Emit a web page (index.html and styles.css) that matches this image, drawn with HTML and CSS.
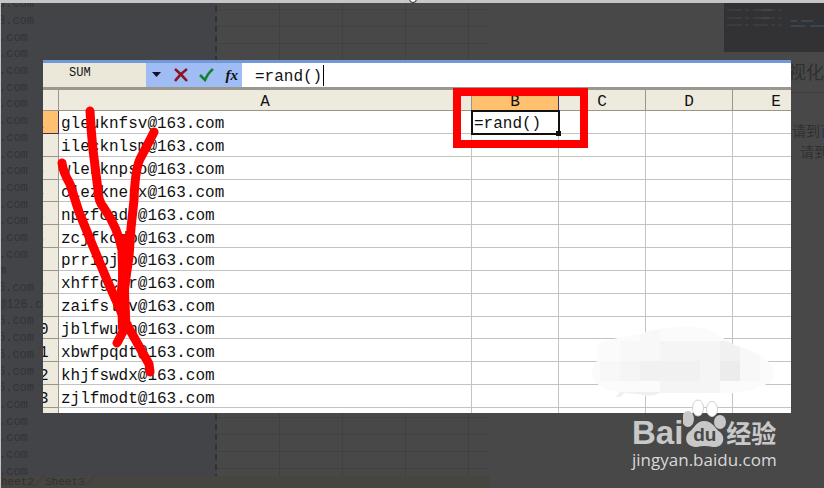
FILE: index.html
```
<!DOCTYPE html>
<html lang="zh-CN">

<head>
  <meta charset="UTF-8" />
  <meta name="viewport" content="width=device-width, initial-scale=1" />
  <title>rand()</title>
  <link rel="stylesheet" href="styles.css">
</head>

<body>
  <!-- dimmed page behind the picture -->
  <div class="page">
    <div class="top-strip"><span class="handle"></span></div>
    <div class="backdrop">
      <div class="old-sheet">
        <div class="old-body">
          <ul class="old-mails">
            <li class="w5">3.com</li>
            <li class="w5">3.com</li>
            <li>.com</li>
            <li>.com</li>
            <li>.com</li>
            <li>.com</li>
            <li>.com</li>
            <li>.com</li>
            <li>.com</li>
            <li>.com</li>
            <li>.com</li>
            <li>.com</li>
            <li>.com</li>
            <li>.com</li>
            <li>.com</li>
            <li>.com</li>
            <li>m</li>
            <li class="w5">6.com</li>
            <li>@126.c</li>
            <li class="w5">6.com</li>
            <li class="w5">6.com</li>
            <li class="w5">6.com</li>
            <li class="w5">6.com</li>
            <li class="w5">6.com</li>
            <li>.com</li>
            <li>.com</li>
            <li>.com</li>
            <li>.com</li>
            <li>.com</li>
          </ul>
          <div class="old-grid"></div>
        </div>
        <div class="old-tabs">heet2╱Sheet3╱</div>
      </div>
      <aside class="side">
        <svg class="thumb" viewBox="0 0 100 49" preserveAspectRatio="none">
          <g stroke-width="2" fill="none">
            <path stroke="#3c3c40" stroke-dasharray="15 3 4 4" d="M3 7H58M3 15H58M3 22H58" />
            <path stroke="#454439" d="M38 7h9M38 15h8" />
            <path stroke="#3a4550" d="M67 18h6M77 18h12M67 23h14M86 23h14" />
          </g>
        </svg>
        <h2>视化</h2>
        <p>请到<a href="#">百</a></p>
        <p class="second">请到</p>
      </aside>
    </div>
  </div>

  <div class="shot">
    <div class="formula-bar">
      <input class="name-box" type="text" value="SUM" aria-label="Name box" />
      <div class="tools">
        <button title="Names"><svg width="10" height="6"><path d="M0 0H9L4.500 5Z" fill="#10102a" /></svg></button>
        <button title="Cancel"><svg width="16" height="16" fill="none" stroke="#8c1420" stroke-width="2.600"><path d="M2 2Q8 7 14 14M14 2Q7 7 2 14" /></svg></button>
        <button title="Enter"><svg width="16" height="16" fill="none" stroke="#12852b" stroke-width="2.600"><path d="M1 8L6 13Q9 6 14 2" /></svg></button>
        <button title="Function" class="fx">fx</button>
      </div>
      <div class="formula">
        <input type="text" value="=rand()" aria-label="Formula" />
        <span class="caret"></span>
      </div>
    </div>

    <table class="sheet">
      <colgroup>
        <col class="col-num" />
        <col />
        <col class="col" />
        <col class="col" />
        <col class="col" />
        <col class="col" />
      </colgroup>
      <thead>
        <tr><th></th><th>A</th><th class="on">B</th><th>C</th><th>D</th><th>E</th></tr>
      </thead>
      <tbody>
        <tr><th class="on">1</th><td>gleuknfsv@163.com</td><td class="active"><input type="text" value="=rand()" aria-label="B1" /></td><td></td><td></td><td></td></tr>
        <tr><th>2</th><td>ilecknlsm@163.com</td><td></td><td></td><td></td><td></td></tr>
        <tr><th>3</th><td>wlenknpso@163.com</td><td></td><td></td><td></td><td></td></tr>
        <tr><th>4</th><td>clezknesx@163.com</td><td></td><td></td><td></td><td></td></tr>
        <tr><th>5</th><td>npzfcadj@163.com</td><td></td><td></td><td></td><td></td></tr>
        <tr><th>6</th><td>zcjfkcdo@163.com</td><td></td><td></td><td></td><td></td></tr>
        <tr><th>7</th><td>prripjao@163.com</td><td></td><td></td><td></td><td></td></tr>
        <tr><th>8</th><td>xhffgcar@163.com</td><td></td><td></td><td></td><td></td></tr>
        <tr><th>9</th><td>zaifslkv@163.com</td><td></td><td></td><td></td><td></td></tr>
        <tr><th>10</th><td>jblfwuoh@163.com</td><td></td><td></td><td></td><td></td></tr>
        <tr><th>11</th><td>xbwfpqdt@163.com</td><td></td><td></td><td></td><td></td></tr>
        <tr><th>12</th><td>khjfswdx@163.com</td><td></td><td></td><td></td><td></td></tr>
        <tr><th>13</th><td>zjlfmodt@163.com</td><td></td><td></td><td></td><td></td></tr>
        <tr class="cut"><th></th><td></td><td></td><td></td><td></td><td></td></tr>
      </tbody>
    </table>

    <svg class="scribble" viewBox="43 60 130 330" fill="none" stroke="#f00" stroke-linecap="round" stroke-linejoin="round">
      <path stroke-width="9" d="M90 111Q91 130 93 150L98 190Q98 201 104 208Q118 228 122 250L124 320" />
      <path stroke-width="9" d="M154 132Q148 144 140 159Q135 170 134 200L131 228L129 257L124 290L126 326L117 343" />
      <path stroke-width="9" d="M62 163Q63 172 70 184L79 212L92 244L107 280L126 323L149 364L150 372" />
      <path stroke-width="12" d="M125 240L126 258L123 290L124 328" />
    </svg>
    <div class="red-box"></div>

    <!-- blurred out patch -->
    <svg class="smudge" viewBox="0 0 182 72">
      <clipPath id="patch">
        <path d="M5 19Q25 12 48 9Q68 2 88 2Q106 0 120 6L142 20Q166 27 178 38Q185 46 180 56Q164 66 142 68H68Q58 73 46 69L32 68Q30 73 24 72L28 67Q4 64 1 52Q-2 44 5 36Z" />
      </clipPath>
      <g clip-path="url(#patch)">
        <path fill="#fbfbfb" d="M0 0h182v72H0z" />
        <path fill="#f8f8f8" d="M48 4h20v32H48zM28 16h140v20H28zM8 36h160v20H8z" />
        <path fill="#f5f5f5" d="M68 16h60v20H68zM28 36h120v20H28zM68 56h60v12H68z" />
        <path fill="#f1f1f1" d="M48 36h60v20H48zM128 16h20v20h-20z" />
        <path fill="#ececec" d="M128 36h20v20h-20z" />
        <path fill="#f0f0f0" d="M24 67h44v5H24z" />
      </g>
    </svg>
  </div>

  <div class="watermark">
    <div class="brand">
      <span class="bai">Bai</span>
      <span class="paw">
        <svg viewBox="0 0 46 50">
          <g fill="#c8c8c8">
            <ellipse cx="5" cy="20" rx="6" ry="8" />
            <ellipse cx="37" cy="23" rx="6" ry="7" />
            <path d="M21 22C30 22 31 29 37 33C43 38 41 49 30 48Q21 46 14 48C2 48 1 38 6 33C12 29 13 22 21 22Z" />
          </g>
          <g fill="#fff" stroke="#d2d2d2">
            <ellipse cx="15" cy="9" rx="5.500" ry="8" />
            <ellipse cx="29" cy="10" rx="5.500" ry="7.500" />
          </g>
        </svg>
        <b>du</b>
      </span>
      <span class="jy">经验</span>
    </div>
    <div class="site">jingyan.baidu.com</div>
  </div>
</body>

</html>
```
FILE: styles.css
```
* {
  box-sizing: border-box;
}

body {
  margin: 0;
  position: relative;
  min-height: 100vh;
  overflow: hidden;
  background: #484848;
  font-family: "Liberation Mono", "Noto Sans CJK SC", monospace;
}

input,
button {
  font: inherit;
  color: inherit;
  border: none;
  padding: 0;
  background: none;
}

/* dimmed page */
.page {
  display: flex;
  flex-direction: column;
  height: 100vh;
}

.top-strip {
  flex: none;
  height: 3px;
  background: #c6c6c6;
  position: relative;
}

.handle {
  position: absolute;
  left: 50%;
  top: -5px;
  width: 8px;
  height: 8px;
  margin-left: -3px;
  border: 1px solid #222;
  border-radius: 50%;
  background: #fff;
}

.backdrop {
  flex: 1;
  min-height: 0;
  display: flex;
  justify-content: space-between;
  border-left: 1px solid #c2c2c2;
}

.old-sheet {
  width: 489px;
  display: flex;
  flex-direction: column;
  overflow: hidden;
  font-size: 12px;
  color: #323336;
}

.old-body {
  flex: 1;
  min-height: 0;
  display: flex;
  overflow: hidden;
}

.old-mails {
  list-style: none;
  width: 216px;
  height: 484px;
  margin: -7px 0 0;
  padding: 0;
  display: grid;
  grid-auto-rows: 1fr;
  align-items: center;
  line-height: 16px;
  background: #434448;
  border-right: 2px dashed #303431;
}

.old-mails li {
  margin-left: -2px;
}

.old-mails .w5 {
  margin-left: -3px;
}

.old-grid {
  flex: 1;
  background-image:
    linear-gradient(90deg, transparent 62px, #414141 62px),
    linear-gradient(transparent 16px, #424242 16px);
  background-size: 63px 100%, 100% 17px;
  background-position: 0 0, 0 -10px;
}

.old-tabs {
  flex: none;
  height: 12px;
  font-size: 11px;
  line-height: 13px;
  background: #464540;
}

.side {
  width: 100px;
  color: #303030;
  font-family: "Noto Sans CJK SC", sans-serif;
  white-space: nowrap;
  overflow: hidden;
}

.thumb {
  display: block;
  width: 100%;
  height: 49px;
  background: #323235;
}

.side h2 {
  margin: 0 0 27px;
  padding: 4px 0 6px 64px;
  font-size: 18px;
  line-height: 30px;
  font-weight: 400;
  border-bottom: 1px solid #3d3d3d;
}

.side p {
  margin: 0;
  padding-left: 68px;
  font-size: 14px;
  line-height: 21px;
}

.side .second {
  padding-left: 76px;
}

.side a {
  color: #2e3350;
  text-decoration: none;
}

/* spreadsheet picture lying over the page */
.shot {
  position: absolute;
  top: 60px;
  left: 43px;
  right: 33px;
  overflow: hidden;
  background: #fff;
  color: #111;
  font-size: 16px;
  border-top: 3px solid #7199d8;
}

.formula-bar {
  display: flex;
  height: 27px;
  border-bottom: 3px solid #9a988c;
}

.name-box {
  width: 103px;
  padding: 0 0 5px 26px;
  font-size: 12px;
  background: #ebe8d9;
}

.tools {
  width: 96px;
  display: flex;
  align-items: center;
  justify-content: space-between;
  padding: 0 4px 0 6px;
  background: #9fbcf4;
}

.tools button {
  display: flex;
}

.fx {
  font: italic bold 15px "Liberation Serif", serif;
}

.formula {
  flex: 1;
  display: flex;
  align-items: center;
  padding-left: 13px;
}

.formula input {
  width: 68px;
  padding-top: 3px;
}

.caret {
  width: 1px;
  height: 21px;
  background: #000;
}

.sheet {
  /* outer columns run past both edges */
  width: calc(100% + 52px);
  height: 323px;
  margin-left: -23px;
  table-layout: fixed;
  border-collapse: separate;
  border-spacing: 0;
}

.col-num {
  width: 39px;
}

.col {
  width: 87px;
}

.sheet th,
.sheet td {
  padding: 6px 0 0;
  line-height: 15px;
  border-right: 1px solid #c3c3c3;
  border-bottom: 1px solid #c3c3c3;
}

.sheet th {
  font-weight: 400;
  background: #eeeade;
  border-color: #98968a;
}

.sheet thead th {
  height: 21px;
  padding-top: 5px;
}

.sheet td {
  padding-left: 2px;
}

.sheet .on {
  background: #ffc070;
  border-color: #3b2f66;
}

.sheet .active {
  padding: 0;
  outline: 2px solid #111;
  outline-offset: -1px;
  position: relative;
}

.active input {
  display: block;
  width: 100%;
  height: 21px;
  padding: 5px 0 0 2px;
}

.active::after {
  content: "";
  position: absolute;
  right: -3px;
  bottom: -3px;
  width: 5px;
  height: 5px;
  background: #111;
}

.sheet .cut th,
.sheet .cut td {
  height: 5px;
  padding: 0;
  line-height: 0;
  border-bottom: none;
}

.scribble {
  position: absolute;
  left: 0;
  top: -3px;
  width: 130px;
  height: 330px;
}

.red-box {
  position: absolute;
  top: 25px;
  right: 203px;
  width: 135px;
  height: 60px;
  border: 8px solid #f00;
}

.smudge {
  position: absolute;
  right: 17px;
  bottom: 16px;
  width: 182px;
  height: 72px;
}

/* logo */
.watermark {
  position: absolute;
  right: 43px;
  bottom: 17px;
  width: 149px;
  color: #c8c8c8;
}

.brand {
  display: flex;
  align-items: flex-end;
  height: 50px;
}

.bai {
  font: bold 33px/32px "Liberation Sans", sans-serif;
}

.paw {
  position: relative;
  flex: none;
  width: 43px;
  height: 50px;
}

.paw svg {
  width: 46px;
  height: 50px;
}

.paw b {
  position: absolute;
  left: 0;
  right: 0;
  bottom: 4px;
  text-align: center;
  font: bold 19px/20px "Liberation Sans", sans-serif;
  color: #484848;
}

.jy {
  padding-bottom: 3px;
  font: bold 25px/28px "Noto Sans CJK SC", sans-serif;
}

.site {
  font: 17px/22px "Open Sans", sans-serif;
  color: #d8d8d8;
}
```
